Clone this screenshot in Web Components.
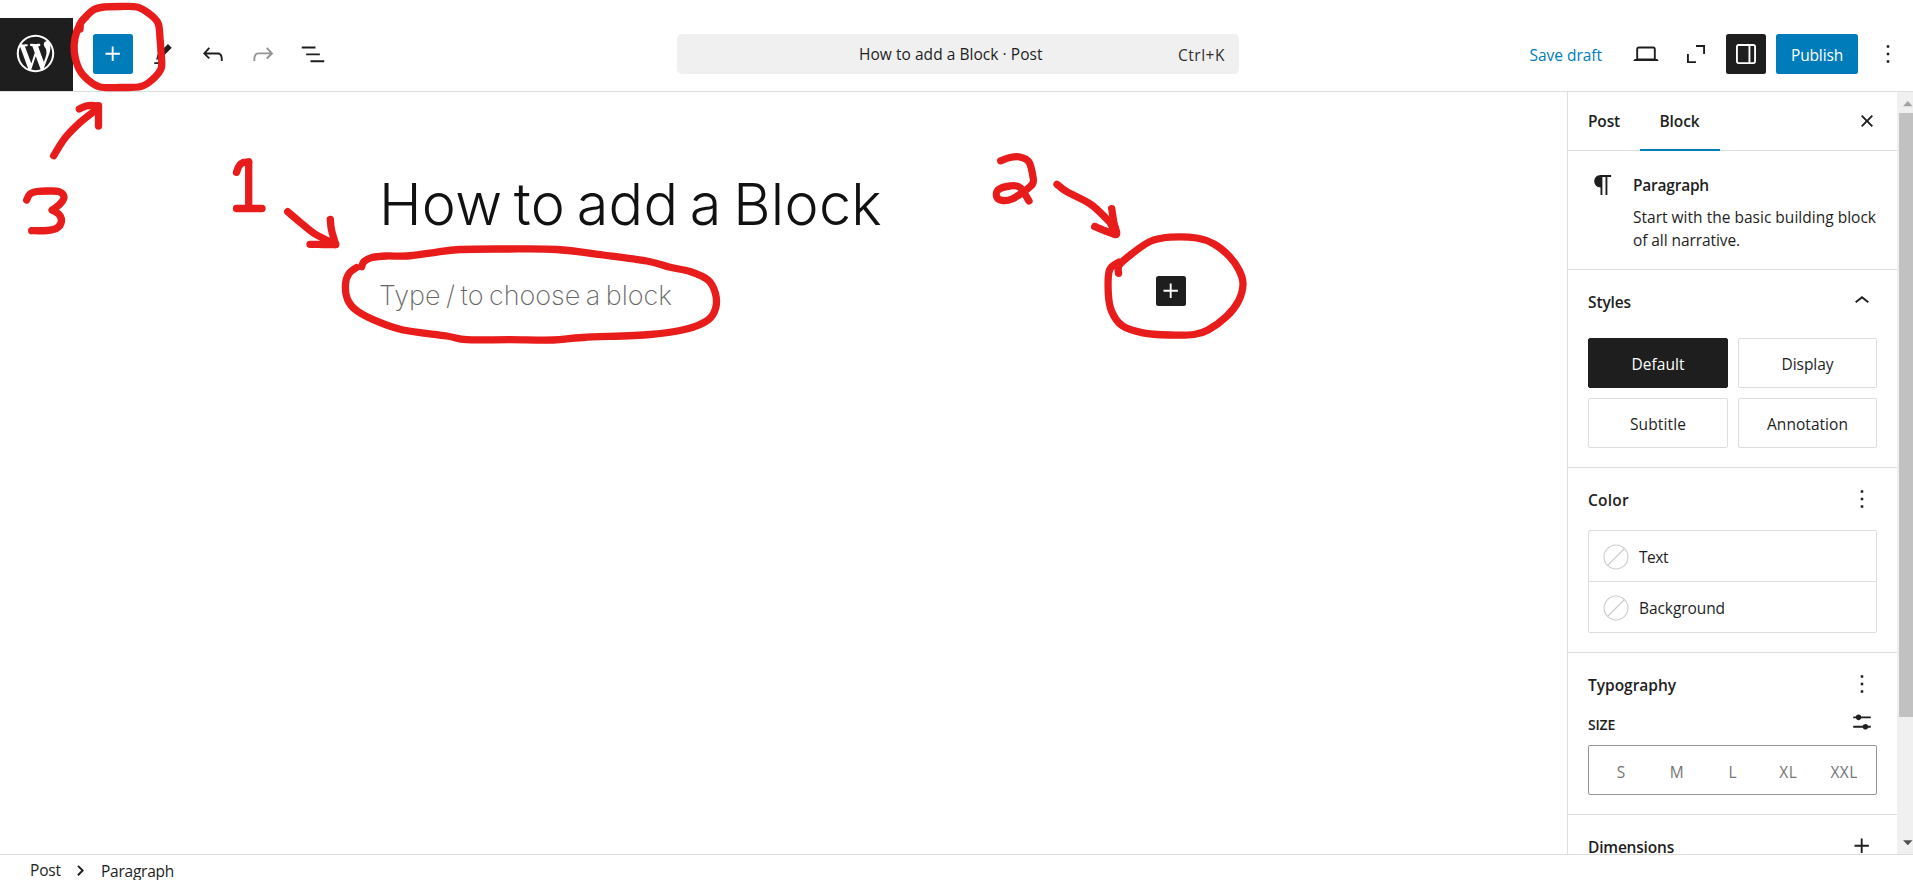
<!DOCTYPE html>
<html lang="en">
<head>
<meta charset="utf-8">
<title>How to add a Block</title>
<style>
  html, body { margin: 0; height: 100%; overflow: hidden; background: #fff; }
  body { font-family: "Open Sans", "Noto Sans", sans-serif; font-size: 15.5px; color: #1e1e1e; }
</style>
</head>
<body>
<post-editor></post-editor>
<script>
const ICONS = {
  plus: 'M11 12.5V17.5H12.5V12.5H17.5V11H12.5V6H11V11H6V12.5H11Z',
  edit: 'm19 7-3-3-8.5 8.5-1 4 4-1L19 7Zm-7 11.5H5V20h7v-1.5Z',
  undo: 'M18.3 11.7c-.6-.6-1.4-.9-2.3-.9H6.7l2.9-3.3-1.1-1-4.5 5L8.5 16l1-1-2.7-2.7H16c.5 0 .9.2 1.3.5 1 1 1 3.4 1 4.5v.3h1.5v-.2c0-1.5 0-4.3-1.5-5.7z',
  redo: 'M15.6 6.5l-1.1 1 2.9 3.3H8c-.9 0-1.7.3-2.3.9-1.4 1.5-1.4 4.2-1.4 5.6v.2h1.5v-.3c0-1.1 0-3.5 1-4.5.3-.3.7-.5 1.3-.5h9.2L14.5 15l1.1 1.1 4.6-4.6-4.6-5z',
  list: 'M3 6h11v1.5H3V6Zm3.5 5.5h11V13h-11v-1.5ZM21 17H10v1.5h11V17Z',
  desktop: 'M20.5 16h-.7V8c0-1.1-.9-2-2-2H6.2c-1.1 0-2 .9-2 2v8h-.7c-.8 0-1.5.7-1.5 1.5h20c0-.8-.7-1.5-1.5-1.5zM5.7 8c0-.3.2-.5.5-.5h11.6c.3 0 .5.2.5.5v7.6H5.7V8z',
  expand: 'M12 4.8h7.2V12h-1.5V6.3H12zM4.8 12h1.5v5.7H12v1.5H4.8z',
  drawer: 'M18 4H6c-1.1 0-2 .9-2 2v12c0 1.1.9 2 2 2h12c1.1 0 2-.9 2-2V6c0-1.1-.9-2-2-2zm-4 14.5H6c-.3 0-.5-.2-.5-.5V6c0-.3.2-.5.5-.5h8v13zm4.5-.5c0 .3-.2.5-.5.5h-2.5v-13H18c.3 0 .5.2.5.5v12z',
  more: 'M13 19h-2v-2h2v2zm0-6h-2v-2h2v2zm0-6h-2V5h2v2z',
  close: 'M12 13.06l3.712 3.713 1.061-1.06L13.061 12l3.712-3.712-1.06-1.06L12 10.938 8.288 7.227l-1.061 1.06L10.939 12l-3.712 3.712 1.06 1.061L12 13.061z',
  paragraph: 'm9.99609 14v-.2251l.00391.0001v6.225h1.5v-14.5h2.5v14.5h1.5v-14.5h3v-1.5h-8.50391c-2.76142 0-5 2.23858-5 5 0 2.7614 2.23858 5 5 5z',
  up: 'M6.5 12.4L12 8l5.5 4.4-.9 1.2L12 10l-4.6 3.6-.9-1.2z',
  settings: 'm19 7.5h-7.628c-.3089-.87389-1.1423-1.5-2.122-1.5-.97966 0-1.81309.62611-2.12197 1.5h-2.12803v1.5h2.12803c.30888.87389 1.14231 1.5 2.12197 1.5.9797 0 1.8131-.62611 2.122-1.5h7.628zm0 7.5h-2.128c-.3089-.8739-1.1423-1.5-2.122-1.5s-1.8131.6261-2.122 1.5h-7.628v1.5h7.628c.3089.8739 1.1423 1.5 2.122 1.5s1.8131-.6261 2.122-1.5h2.128z',
  next: 'M9 7.6l1.1-1.1 4.3 4.3-4.3 4.3L9 14l3.2-3.2z',
  wordpress: 'M20 10c0-5.51-4.49-10-10-10C4.48 0 0 4.49 0 10c0 5.52 4.48 10 10 10 5.51 0 10-4.48 10-10zM7.78 15.37L4.37 6.22c.55-.02 1.17-.08 1.17-.08.5-.06.44-1.13-.06-1.11 0 0-1.45.11-2.37.11-.18 0-.37 0-.58-.01C4.12 2.69 6.87 1.11 10 1.11c2.33 0 4.45.87 6.05 2.34-.68-.11-1.65.39-1.65 1.58 0 .74.45 1.36.9 2.1.35.61.55 1.36.55 2.46 0 1.49-1.4 5-1.4 5l-3.03-8.37c.54-.02.82-.17.82-.17.5-.05.44-1.25-.06-1.22 0 0-1.44.12-2.38.12-.87 0-2.33-.12-2.33-.12-.5-.03-.56 1.2-.06 1.22l.92.08 1.26 3.41zM17.41 10c.24-.64.74-1.87.43-4.25.7 1.29 1.05 2.71 1.05 4.25 0 3.29-1.73 6.24-4.4 7.78.97-2.59 1.94-5.2 2.92-7.78zM6.1 18.09C3.12 16.65 1.11 13.53 1.11 10c0-1.3.23-2.48.72-3.59C3.25 10.3 4.67 14.2 6.1 18.09zm4.03-6.63l2.58 6.98c-.86.29-1.76.45-2.71.45-.79 0-1.57-.11-2.29-.33.81-2.38 1.62-4.74 2.42-7.1z'
};

const define = (name, html, ready) => customElements.define(name, class extends HTMLElement {
  connectedCallback() {
    if (this.shadowRoot) return;
    this.attachShadow({ mode: 'open' }).innerHTML = html;
    if (ready) ready(this, this.shadowRoot);
  }
});

define('ui-icon', `<style>
  :host { display: block; flex: none; width: 30px; height: 30px; }
  svg { display: block; width: 100%; height: 100%; fill: currentColor; }
</style><svg viewBox="0 0 24 24"><path/></svg>`, (el, root) => {
  const name = el.getAttribute('name');
  if (name === 'wordpress') root.querySelector('svg').setAttribute('viewBox', '-2 -2 24 24');
  root.querySelector('path').setAttribute('d', ICONS[name]);
});

// A single line of text tracked to the width given in "w".
define('ui-text', `<style>
  :host { display: block; flex: none; white-space: nowrap; line-height: 22px; }
  span { display: inline-block; vertical-align: top; }
</style><span><slot></slot></span>`, (el, root) => {
  const w = parseFloat(el.getAttribute('w'));
  if (!w) return;
  const span = root.querySelector('span');
  const n = el.textContent.length;
  span.style.letterSpacing = ((w - span.getBoundingClientRect().width) / n) + 'px';
  el.style.width = w + 'px';
});

define('icon-button', `<style>
  :host { display: flex; flex: none; align-items: center; justify-content: center; width: 40px; height: 40px; border-radius: 2.5px; }
  :host([primary]) { background: #007cba; color: #fff; }
  :host([pressed]) { background: #1e1e1e; color: #fff; }
  :host([disabled]) { color: #949494; }
  :host([small]) { width: 30px; height: 30px; }
</style><slot></slot>`);

define('editor-header', `<style>
  :host { display: flex; flex: none; align-items: flex-start; height: 73px; margin-top: 18px; border-bottom: 1px solid #ddd; }
  .logo { width: 73px; height: 73px; background: #1e1e1e; color: #fff; display: flex; align-items: center; justify-content: center; }
  .logo ui-icon { width: 45px; height: 45px; margin: 0 2px 2px 0; }
  .tools { display: flex; gap: 10px; margin: 16px 0 0 20px; flex: none; }
  .command { display: flex; align-items: center; box-sizing: border-box; width: 562px; height: 40px; margin: 16px 0 0 344px; background: #f0f0f0; border-radius: 5px; padding: 0 14px 0 182px; justify-content: space-between; }
  .end { display: flex; align-items: center; height: 40px; margin: 16px 0 0 auto; }
  .end ui-text { padding-top: 2px; }
  .save { color: #007cba; margin-right: 24px; }
  .publish { display: flex; align-items: center; justify-content: center; width: 82px; height: 40px; background: #007cba; color: #fff; border-radius: 2.5px; margin: 0 10px; }
  .k { padding-top: 2px; color: #2f2f2f; }
</style>
<div class="logo"><ui-icon name="wordpress"></ui-icon></div>
<div class="tools">
  <icon-button primary><ui-icon name="plus"></ui-icon></icon-button>
  <icon-button><ui-icon name="edit"></ui-icon></icon-button>
  <icon-button><ui-icon name="undo"></ui-icon></icon-button>
  <icon-button disabled><ui-icon name="redo"></ui-icon></icon-button>
  <icon-button><ui-icon name="list"></ui-icon></icon-button>
</div>
<div class="command"><ui-text w="183.5">How to add a Block · Post</ui-text><ui-text class="k" w="47">Ctrl+K</ui-text></div>
<div class="end">
  <ui-text class="save" w="72.5">Save draft</ui-text>
  <icon-button><ui-icon name="desktop"></ui-icon></icon-button>
  <icon-button style="margin:0 10px"><ui-icon name="expand"></ui-icon></icon-button>
  <icon-button pressed><ui-icon name="drawer"></ui-icon></icon-button>
  <div class="publish"><ui-text w="52">Publish</ui-text></div>
  <icon-button style="margin-right:5px"><ui-icon name="more"></ui-icon></icon-button>
</div>`);

define('post-canvas', `<style>
  :host { display: block; flex: 1; min-width: 0; font-family: Inter, sans-serif; }
  .col { width: 808px; padding: 77px 0 0 379px; }
  .title { font-size: 57.5px; font-weight: 350; line-height: 70px; color: #111; word-spacing: -5px; }
  .row { display: flex; align-items: flex-start; justify-content: space-between; margin-top: 36px; }
  .hint { font-size: 27px; font-weight: 250; line-height: 40px; color: #666; word-spacing: -2px; padding-top: 1px; }
  icon-button { margin: 1px 1px 0 0; }
</style>
<div class="col">
  <ui-text class="title" w="503">How to add a Block</ui-text>
  <div class="row"><ui-text class="hint" w="293">Type / to choose a block</ui-text><icon-button small pressed><ui-icon name="plus"></ui-icon></icon-button></div>
</div>`);

define('panel-head', `<style>
  :host { display: flex; align-items: center; justify-content: space-between; height: 30px; font-weight: 600; }
  ::slotted(ui-icon) { margin-top: var(--lift, -6px); }
</style><slot></slot>`);

define('panel-section', `<style>
  :host { display: block; flex: none; box-sizing: border-box; border-bottom: 1px solid #ddd; padding: 0 20px; }
</style><slot></slot>`);

define('style-option', `<style>
  :host { display: flex; align-items: center; justify-content: center; box-sizing: border-box; height: 50px; border: 1px solid #ddd; border-radius: 2px; padding-top: 2px; }
  :host([selected]) { background: #1e1e1e; border-color: #1e1e1e; color: #fff; }
</style><slot></slot>`);

define('color-row', `<style>
  :host { display: flex; align-items: center; gap: 10px; height: 50px; padding-left: 14px; }
  svg { width: 26px; height: 26px; fill: none; stroke: #ccc; stroke-width: 1.1; margin-top: 1px; }
  ::slotted(ui-text) { padding-top: 2px; }
</style><svg viewBox="0 0 26 26"><circle cx="13" cy="13" r="12"/><path d="M4.5 21.5l17-17"/></svg><slot></slot>`);

define('scroll-bar', `<style>
  :host { display: flex; flex-direction: column; flex: none; width: 16px; background: #f0f0f0; }
  svg { display: block; width: 16px; height: 21px; flex: none; }
  i { display: block; height: 604px; margin-left: 2px; background: #c1c1c1; }
  svg:last-child { margin-top: auto; }
</style>
<svg viewBox="0 0 16 21"><path fill="#a3a3a3" d="M6 14.3l4.8-5.3 4.7 5.3z"/></svg><i></i>
<svg viewBox="0 0 16 21"><path fill="#505050" d="M6 7.2h9.5l-4.7 5z"/></svg>`);

define('block-sidebar', `<style>
  :host { display: flex; flex: none; width: 345px; border-left: 1px solid #ddd; overflow: hidden; }
  .panels { width: 329px; flex: none; overflow: hidden; display: flex; flex-direction: column; }
  .tabs { display: flex; flex: none; height: 58px; border-bottom: 1px solid #ddd; align-items: center; font-weight: 600; }
  .tabs > ui-text { margin-left: 20px; }
  .active { align-self: stretch; display: flex; align-items: center; width: 60px; padding-left: 20px; margin: 0 0 -1px 19.5px; border-bottom: 2px solid #007cba; }
  .tabs ui-icon { margin: 0 15px 0 auto; }
  .card { display: flex; height: 119px; gap: 15px; }
  .card ui-icon { margin-top: 19px; }
  .card b { display: block; font-weight: 600; margin: 23px 0 10px; }
  .card ui-text + ui-text { margin-top: 1px; }
  .grid { display: grid; grid-template-columns: 140px 139px; gap: 10px; }
  .colors { box-sizing: border-box; height: 103px; border: 1px solid #ddd; border-radius: 2px; }
  color-row + color-row { border-top: 1px solid #ddd; }
  .sizes { box-sizing: border-box; height: 50px; border: 1px solid #949494; border-radius: 2px; padding: 3px 4px 0; display: grid; grid-template-columns: repeat(5, 1fr); align-items: center; justify-items: center; color: #757575; }
  .sz { font-size: 14px; }
  .edge { line-height: 14px; }
</style>
<div class="panels">
  <div class="tabs"><ui-text w="32">Post</ui-text><div class="active"><ui-text w="40">Block</ui-text></div><ui-icon name="close"></ui-icon></div>
  <panel-section class="card">
    <ui-icon name="paragraph"></ui-icon>
    <div><b><ui-text w="76">Paragraph</ui-text></b><ui-text w="243">Start with the basic building block</ui-text><ui-text w="107">of all narrative.</ui-text></div>
  </panel-section>
  <panel-section style="height:198px">
    <panel-head style="padding:17px 0 21px;--lift:-2px"><ui-text w="43">Styles</ui-text><ui-icon name="up"></ui-icon></panel-head>
    <div class="grid">
      <style-option selected><ui-text w="53">Default</ui-text></style-option>
      <style-option><ui-text w="52">Display</ui-text></style-option>
      <style-option><ui-text w="56">Subtitle</ui-text></style-option>
      <style-option><ui-text w="81">Annotation</ui-text></style-option>
    </div>
  </panel-section>
  <panel-section style="height:185px">
    <panel-head style="padding:17px 0 15px;--lift:-2px"><ui-text w="41">Color</ui-text><ui-icon name="more"></ui-icon></panel-head>
    <div class="colors">
      <color-row><ui-text w="29">Text</ui-text></color-row>
      <color-row><ui-text w="86">Background</ui-text></color-row>
    </div>
  </panel-section>
  <panel-section style="height:162px">
    <panel-head style="padding:17px 0 0;--lift:-2px"><ui-text w="88">Typography</ui-text><ui-icon name="more"></ui-icon></panel-head>
    <panel-head style="padding:10px 0 5px;--lift:-7px"><ui-text class="sz" w="27">SIZE</ui-text><ui-icon name="settings"></ui-icon></panel-head>
    <div class="sizes"><ui-text w="8.5">S</ui-text><ui-text w="14">M</ui-text><ui-text w="8">L</ui-text><ui-text w="18">XL</ui-text><ui-text w="27">XXL</ui-text></div>
  </panel-section>
  <panel-section style="height:80px">
    <panel-head style="padding:17px 0 0;--lift:-2px"><ui-text class="edge" w="86">Dimensions</ui-text><ui-icon name="plus"></ui-icon></panel-head>
  </panel-section>
</div>
<scroll-bar></scroll-bar>`);

define('block-breadcrumb', `<style>
  :host { display: flex; flex: none; align-items: flex-start; box-sizing: border-box; height: 26px; border-top: 1px solid #ddd; padding: 6px 0 0 30px; overflow: hidden; }
  ui-icon { margin: -4px 5px 0 5px; }
  ui-text { line-height: 18px; }
  ui-text:last-child { padding-top: 1px; }
</style>
<ui-text w="31">Post</ui-text><ui-icon name="next"></ui-icon><ui-text w="73">Paragraph</ui-text>`);

// Freehand pen marks laid over the editor; each list is x,y points along a stroke.
const INK = [
  [80,29, 81,22, 86,16.5, 94,9.5, 104,7, 120,6.5, 137,7, 149,13.5, 158,23, 160,38, 161,52, 161.3,68, 153,79, 141,86.5, 120,87.5, 100,87, 88,80, 79,69, 74.3,52, 75,38, 80,24, 86,17],
  [53.7,155.7, 65,138, 80,122.5, 97,109],
  [79.3,109, 86,106, 92,105.5, 98.5,106],
  [98.5,106, 98.5,126],
  [26.7,200, 30,194, 37,191.5, 49,191, 59,191.7, 64,197, 60,204, 52.3,210],
  [52.3,210, 59.5,215, 61.3,222, 57,228, 47,230.5, 31.7,230.7],
  [236.5,172.3, 239,166, 243,162.7, 248.7,162],
  [248.7,162, 248.7,207],
  [236.5,208.5, 262,208.5],
  [287.7,211.7, 301,223, 315,234, 335.5,244.3],
  [330.3,219.3, 331.5,230, 335.7,244.5],
  [310,244.3, 323,244.5, 335.5,244.7],
  [361.7,266.7, 364,261.5, 372,257.5, 386.7,256, 407,256, 432,252.8, 460,249.5, 506.7,249, 556.7,249.5, 603,255, 646.7,261, 670,267.3, 690,271.5, 708,280, 715.3,293, 715.7,308, 708,320, 686.7,329, 650,334.5, 583,337.5, 553,340, 510,339.7, 466.7,339.7, 446.7,336, 403,330, 376.7,321.2, 356.7,310.7, 347.3,299, 345.5,284, 349,273.5, 356.5,267.5],
  [1000.7,160.7, 1010,157.5, 1020,157, 1029,162, 1033,177, 1032.5,184, 1024,191.5, 1012,199, 1003,200.5, 997,197.5, 998,190, 1010,186, 1020,187.5, 1029,201],
  [1057,184.3, 1066.7,191.7, 1091.7,205, 1112,224.5],
  [1111.7,208.7, 1114,223, 1116.7,232.5, 1115,234.5, 1107,231.5, 1094.7,226.5],
  [1111,224, 1114.5,231],
  [1118.5,273.3, 1119.3,265, 1131,254.5, 1150,241.5, 1170,237.2, 1196.7,238, 1214,244, 1229,256, 1239,270, 1243,284, 1238.5,301, 1227,316, 1208,330, 1194,334.5, 1170,335, 1143,332.8, 1122,325.5, 1111.5,311, 1108.3,293, 1109.5,270, 1119,262]
];
define('pen-marks', `<style>
  :host { display: block; position: absolute; inset: 0; pointer-events: none; }
  svg { display: block; width: 1913px; height: 880px; fill: none; stroke: #e71c1b; stroke-width: 7.3; stroke-linecap: round; stroke-linejoin: round; }
</style><svg viewBox="0 0 1913 880"></svg>`, (el, root) => {
  const curve = f => {
    const p = [];
    for (let i = 0; i < f.length; i += 2) p.push([f[i], f[i + 1]]);
    let d = 'M' + p[0];
    for (let i = 0; i < p.length - 1; i++) {
      const a = p[i - 1] || p[i], b = p[i], c = p[i + 1], e = p[i + 2] || c;
      d += `C${b[0] + (c[0] - a[0]) / 6},${b[1] + (c[1] - a[1]) / 6} ${c[0] - (e[0] - b[0]) / 6},${c[1] - (e[1] - b[1]) / 6} ${c}`;
    }
    return `<path d="${d}"/>`;
  };
  root.querySelector('svg').innerHTML = INK.map(curve).join('');
});

define('post-editor', `<style>
  :host { display: flex; flex-direction: column; width: 1913px; height: 880px; position: relative; overflow: hidden; background: #fff; }
  main { display: flex; flex: 1; min-height: 0; }
</style>
<editor-header></editor-header>
<main><post-canvas></post-canvas><block-sidebar></block-sidebar></main>
<block-breadcrumb></block-breadcrumb>
<pen-marks></pen-marks>`);
</script>
</body>
</html>
